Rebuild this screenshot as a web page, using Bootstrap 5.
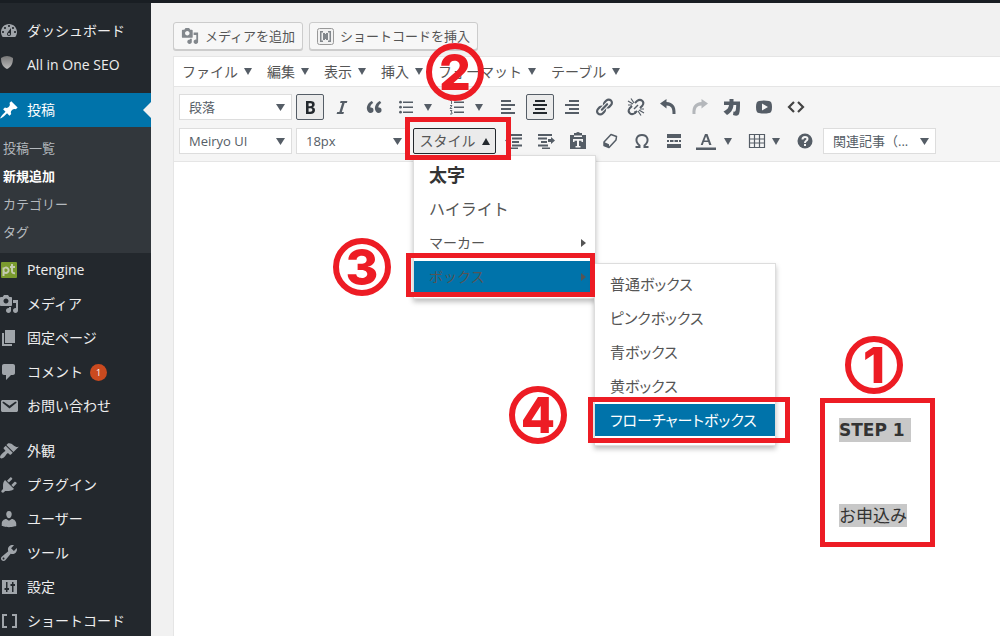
<!DOCTYPE html>
<html lang="ja">
<head>
<meta charset="utf-8">
<meta name="viewport" content="width=device-width, initial-scale=1">
<title>投稿の新規追加</title>
<link href="https://cdn.jsdelivr.net/npm/bootstrap@5.3.0/dist/css/bootstrap.min.css" rel="stylesheet">
<style>
  :root { --ink: #555d66; --mark: #ed1c24; --wpblue: #0073aa; --line: #e5e5e5; }
  body { font-family: "Open Sans", "Noto Sans CJK JP", sans-serif; font-size: 14px; line-height: 20px; background: #f1f1f1; color: #555; }
  button { font-family: inherit; }
  svg { display: block; flex: none; fill: currentColor; }
  .adminbar { height: 3px; background: #191e23; }

  /* sidebar */
  .side { width: 151px; background: #23282d; padding-top: 11px; }
  .side-link { height: 34px; gap: 7px; color: #eee; }
  .side-link svg { color: #a0a5aa; }
  .side-link.current { background: var(--wpblue); color: #fff; }
  .side-link.current svg { color: #fff; }
  .side-link.current::after { content: ""; margin-left: auto; border: 8px solid transparent; border-right-color: #f1f1f1; border-left: 0; }
  .side-gap { margin-top: 11px; }
  .side-sub { background: #32373c; padding: 7px 3px; font-size: 13px; line-height: 28px; }
  .side-sub a { color: #b4b9be; }
  .side-sub a.here { color: #fff; font-weight: 700; }
  .count { width: 17px; height: 17px; font-size: 9px; line-height: 17px; background: #ca4a1f; color: #fff; }

  /* editor */
  .work { padding: 19px 0 0 22px; }
  .inserts { gap: 6px; }
  .insert { height: 28px; padding: 0 7px; gap: 6px; font-size: 13px; line-height: 18px; color: #555; background: #f7f7f7; border: 1px solid #ccc; border-radius: 3px; box-shadow: 0 1px 0 #ccc; }
  .insert svg { color: #82878c; }
  .editor { margin-top: 6px; border: 1px solid var(--line); border-width: 1px 0 0 1px; background: #fff; }
  .menus { height: 30px; border-bottom: 1px solid var(--line); }
  .menu-btn { padding: 0 7px 0 8px; gap: 6px; border: 0; background: none; color: #555; height: 29px; }
  .tri { border: 4px solid transparent; border-top: 7px solid var(--ink); border-bottom: 0; }
  .tri.up { border-bottom: 7px solid #23282d; border-top: 0; }
  .tools { background: #f5f5f5; border-bottom: 1px solid var(--line); padding: 7px 5px; }
  .tools-row { height: 26px; gap: 4px; }
  .tools-row + .tools-row { margin-top: 8px; }
  .pick { width: 113px; height: 26px; padding: 0 22px 0 9px; font-size: 13px; line-height: 24px; color: #555d66; border: 1px solid #ddd; border-radius: 0; background-color: #fff; background-size: 9px 7px; background-position: right 6px center;
    --bs-form-select-bg-img: url("data:image/svg+xml,%3csvg xmlns='http://www.w3.org/2000/svg' viewBox='0 0 18 14'%3e%3cpath d='M0 0h18L9 14z' fill='%23555d66'/%3e%3c/svg%3e"); }
  .tool { width: 28px; height: 26px; padding: 0; border: 1px solid transparent; border-radius: 2px; background: none; color: var(--ink); display: flex; align-items: center; justify-content: center; }
  .tool.on { background: #ebebeb; border-color: #555d66; color: #23282d; }
  .tool.split { width: 47px; justify-content: flex-start; padding-left: 3px; gap: 8px; }
  .tool.drop { width: 44px; justify-content: flex-start; padding-left: 3px; gap: 5px; }
  .tool.styles { width: 83px; gap: 6px; font-size: 14px; color: #555; border-color: #23282d; }
  .tool.faded { opacity: .4; }

  /* style menu */
  .pop { border: 1px solid #ddd; border-radius: 0; box-shadow: 0 3px 5px rgba(0,0,0,.25); padding: 3px 0 6px; margin: 0; }
  .pop-main { top: 27px; left: 0; width: 183px; gap: 3px; }
  .pop-main.show, .pop-sub.show { display: flex; flex-direction: column; }
  .pop-item { height: 31px; padding: 0 9px 0 15px; display: flex; align-items: center; justify-content: space-between; font-size: 14px; white-space: nowrap; color: #555; }
  .pop-item.active { background: var(--wpblue); color: #555; }
  .pop-item.heavy { font-size: 18px; font-weight: 700; color: #333; }
  .pop-item.large { font-size: 16px; }
  .arrow { border: 4px solid transparent; border-left: 5px solid currentColor; border-right: 0; }
  .pop-sub { top: 2px; left: 180px; width: 182px; gap: 2px; padding: 4px 0 9px; }
  .pop-sub .pop-item { height: 32px; font-size: 15px; font-feature-settings: "palt"; }
  .pop-sub .pop-item.active { color: #fff; }

  /* red guide marks laid over the screen */
  .frame { position: absolute; border: 5px solid var(--mark); pointer-events: none; z-index: 1010; }
  .num { position: absolute; width: 58px; height: 58px; border: 6px solid var(--mark); border-radius: 50%; color: var(--mark); font: 800 50px/46px Inter, sans-serif; text-align: center; pointer-events: none; z-index: 1020; }
  .frame-2 { inset: -11px -15px -6px -8px; }
  .num-2 { left: -4px; top: -14px; }
  .frame-3 { inset: -8px 0 -5px -8px; }
  .num-3 { left: -81px; top: -23px; }
  .frame-4 { inset: -7px -15px -7px -7px; }
  .num-4 { left: -86px; top: -18px; }
  .frame-1 { inset: 0; }
  .num-1 { left: 25px; top: -62px; }

  .step { width: 115px; height: 149px; margin: 236px 65px 0 auto; padding: 20px 19px; font-size: 17px; line-height: 24px; color: #333; }
  .step .picked { background: #c8c8c8; white-space: pre; }
  .step p + p { margin-top: 62px; }
  .step .title { font-family: "DejaVu Sans", sans-serif; font-weight: 700; }
  .step .title .picked { padding: 2px 0; }
</style>
<script defer src="https://cdn.jsdelivr.net/npm/bootstrap@5.3.0/dist/js/bootstrap.bundle.min.js"></script>
</head>
<body>
<svg class="d-none" aria-hidden="true">
  <symbol id="media" viewBox="0 0 20 20"><path d="M13 11V4c0-.55-.45-1-1-1h-1.670L9 1H5L3.670 3H2c-.55 0-1 .45-1 1v7c0 .55.45 1 1 1h10c.55 0 1-.45 1-1zM7 4.500c1.380 0 2.500 1.120 2.500 2.500S8.380 9.500 7 9.500 4.500 8.380 4.500 7 5.620 4.500 7 4.500zM14 6h5v10.500c0 1.380-1.120 2.500-2.500 2.500S14 17.880 14 16.500s1.120-2.500 2.500-2.500c.17 0 .34.02.5.05V9h-3V6zm-4 8.050V13h2v3.500c0 1.380-1.120 2.500-2.500 2.500S7 17.880 7 16.500 8.120 14 9.500 14c.17 0 .34.02.5.05z"/></symbol>
</svg>
<div class="vh-100 d-flex flex-column overflow-hidden">
  <header class="adminbar flex-shrink-0"></header>
  <div class="d-flex flex-grow-1 overflow-hidden">

    <nav class="side flex-shrink-0 overflow-hidden" aria-label="管理メニュー">
      <a href="#" class="side-link d-flex align-items-center text-decoration-none">
        <svg width="20" height="20" viewBox="1 0 20 20"><path d="M3.760 16h12.480c1.100-1.370 1.760-3.110 1.760-5 0-4.420-3.580-8-8-8s-8 3.580-8 8c0 1.890.66 3.630 1.760 5zM10 4c.55 0 1 .45 1 1s-.45 1-1 1-1-.45-1-1 .45-1 1-1zM6 6c.55 0 1 .45 1 1s-.45 1-1 1-1-.45-1-1 .45-1 1-1zm8 0c.55 0 1 .45 1 1s-.45 1-1 1-1-.45-1-1 .45-1 1-1zm-5.370 5.550L12 7v6c0 1.100-.9 2-2 2s-2-.9-2-2c0-.57.24-1.080.63-1.450zM4 10c.55 0 1 .45 1 1s-.45 1-1 1-1-.45-1-1 .45-1 1-1zm12 0c.55 0 1 .45 1 1s-.45 1-1 1-1-.45-1-1 .45-1 1-1zm-5 3c0-.55-.45-1-1-1s-1 .45-1 1 .45 1 1 1 1-.45 1-1z" fill-rule="evenodd"/></svg>ダッシュボード</a>
      <a href="#" class="side-link d-flex align-items-center text-decoration-none">
        <svg width="20" height="20" viewBox="0 0 20 20"><defs><linearGradient id="sh" x2="0" y2="1"><stop stop-color="#777"/><stop offset="1" stop-color="#bbb"/></linearGradient></defs><path d="M1 3Q7-1 13 3c0 6-2 9-6 11-4-2-6-5-6-11z" fill="url(#sh)"/></svg>All in One SEO</a>
      <a href="#" class="side-link side-gap current d-flex align-items-center text-decoration-none" aria-current="page">
        <svg width="20" height="20" viewBox="1 0 20 20"><path d="M10.440 3.020l1.820-1.820 6.360 6.350-1.830 1.820c-1.050-.68-2.480-.57-3.410.36l-.75.75c-.92.93-1.040 2.350-.35 3.410l-1.830 1.820-2.410-2.410-2.800 2.790c-.42.42-3.380 2.710-3.800 2.290s1.860-3.390 2.280-3.810l2.790-2.790L4.100 9.360l1.830-1.820c1.050.69 2.480.57 3.400-.36l.75-.75c.93-.92 1.050-2.350.36-3.410z"/></svg>投稿</a>
      <div class="side-sub d-flex flex-column">
        <a href="#" class="text-decoration-none">投稿一覧</a>
        <a href="#" class="text-decoration-none here">新規追加</a>
        <a href="#" class="text-decoration-none">カテゴリー</a>
        <a href="#" class="text-decoration-none">タグ</a>
      </div>
      <a href="#" class="side-link d-flex align-items-center text-decoration-none">
        <svg width="20" height="20" viewBox="0 0 20 20"><rect x="1" y="2" width="16" height="16" rx="1" fill="#7a9a2e"/><path d="M3.500 16V7.500M3.500 9a2.700 2.700 0 1 1 0 2.500M12 4v7q0 2.500 3 2.300M10 7h5" fill="none" stroke="#c5cbb0" stroke-width="2"/></svg>Ptengine</a>
      <a href="#" class="side-link d-flex align-items-center text-decoration-none">
        <svg width="20" height="20" viewBox="1 0 20 20"><use href="#media" width="20" height="20"/></svg>メディア</a>
      <a href="#" class="side-link d-flex align-items-center text-decoration-none">
        <svg width="20" height="20" viewBox="1 0 20 20"><path d="M6 15V2h10v13H6zm-1 1h8v2H3V5h2v11z"/></svg>固定ページ</a>
      <a href="#" class="side-link d-flex align-items-center text-decoration-none">
        <svg width="20" height="20" viewBox="1 0 20 20"><path d="M5 2h9c1.100 0 2 .9 2 2v7c0 1.100-.9 2-2 2h-2l-5 5v-5H5c-1.100 0-2-.9-2-2V4c0-1.100.9-2 2-2z"/></svg>コメント
        <span class="count rounded-circle text-center">1</span></a>
      <a href="#" class="side-link d-flex align-items-center text-decoration-none">
        <svg width="20" height="20" viewBox="1 0 20 20"><path d="M3.870 4h13.250C18.370 4 19 4.590 19 5.790v8.420c0 1.190-.63 1.790-1.880 1.790H3.870c-1.250 0-1.880-.6-1.880-1.790V5.790c0-1.200.63-1.790 1.880-1.790zm6.620 8.600l6.740-5.530c.24-.2.43-.66.13-1.070-.29-.41-.82-.42-1.170-.17l-5.700 3.860L4.800 5.830c-.35-.25-.88-.24-1.170.17-.3.41-.11.87.13 1.070z"/></svg>お問い合わせ</a>
      <a href="#" class="side-link side-gap d-flex align-items-center text-decoration-none">
        <svg width="20" height="20" viewBox="1 0 20 20"><path d="M14.480 11.060L7.410 3.990l1.500-1.500c.5-.56 2.300-.47 3.510.32 1.210.8 1.430 1.280 2.910 2.100 1.180.64 2.450 1.260 4.450.85zm-.71.71L6.700 4.700 4.930 6.470c-.39.39-.39 1.020 0 1.410l1.060 1.060c.39.39.39 1.030 0 1.420-.6.6-1.430 1.110-2.210 1.690-.35.26-.7.53-1.010.84C1.430 14.230.4 16.080 1.400 17.070c.99 1 2.840-.03 4.180-1.360.31-.31.58-.66.85-1.020.57-.78 1.080-1.610 1.690-2.210.39-.39 1.020-.39 1.410 0l1.060 1.060c.39.39 1.020.39 1.410 0z"/></svg>外観</a>
      <a href="#" class="side-link d-flex align-items-center text-decoration-none">
        <svg width="20" height="20" viewBox="1 0 20 20"><path d="M13.110 4.360L9.870 7.600 8 5.730l3.240-3.240c.35-.34 1.050-.2 1.560.32.52.51.66 1.210.31 1.550zm-8 1.770l.91-1.120 9.010 9.010-1.190.84c-.71.71-2.630 1.160-3.820 1.160H6.140L4.900 17.260c-.59.59-1.540.59-2.120 0-.59-.58-.59-1.530 0-2.120l1.240-1.240v-3.880c0-1.130.4-3.190 1.090-3.890zm7.260 3.970l3.240-3.240c.34-.35 1.040-.21 1.550.31.52.51.66 1.210.31 1.550l-3.240 3.250z"/></svg>プラグイン</a>
      <a href="#" class="side-link d-flex align-items-center text-decoration-none">
        <svg width="20" height="20" viewBox="1 0 20 20"><path d="M10 9.250c-2.270 0-2.730-3.440-2.730-3.440C7 4.020 7.820 2 9.970 2c2.160 0 2.980 2.020 2.710 3.810 0 0-.41 3.440-2.680 3.440zm0 2.570L12.720 10c2.390 0 4.520 2.330 4.520 4.530v2.490s-3.650 1.130-7.240 1.130c-3.650 0-7.240-1.130-7.240-1.130v-2.490c0-2.250 1.940-4.480 4.470-4.480z"/></svg>ユーザー</a>
      <a href="#" class="side-link d-flex align-items-center text-decoration-none">
        <svg width="20" height="20" viewBox="1 0 20 20"><path d="M16.680 9.770c-1.340 1.340-3.300 1.670-4.950.99l-5.410 6.520c-.99.99-2.590.99-3.580 0s-.99-2.590 0-3.570l6.520-5.420c-.68-1.650-.35-3.610.99-4.950 1.280-1.280 3.120-1.620 4.720-1.060l-2.890 2.890 2.820 2.820 2.860-2.870c.53 1.580.18 3.390-1.080 4.650zM3.810 16.210c.4.39 1.040.39 1.430 0 .4-.4.4-1.040 0-1.430-.39-.4-1.030-.4-1.430 0-.39.39-.39 1.030 0 1.430z"/></svg>ツール</a>
      <a href="#" class="side-link d-flex align-items-center text-decoration-none">
        <svg width="20" height="20" viewBox="0 0 20 20"><path fill-rule="evenodd" d="M2 3h15v14H2zM6 5h1.500v6H9v2H7.500v2H6v-2H4.500v-2H6zM12 5h1.500v2H15v2h-1.500v6H12V9h-1.500V7H12z"/></svg>設定</a>
      <a href="#" class="side-link d-flex align-items-center text-decoration-none">
        <svg width="20" height="20" viewBox="0 0 20 20"><path d="M2 3h5v2H4v10h3v2H2zM17 3h-5v2h3v10h-3v2h5z"/></svg>ショートコード</a>
    </nav>

    <main class="work flex-grow-1 d-flex flex-column">
      <div class="inserts d-flex">
        <button type="button" class="insert d-flex align-items-center"><svg width="18" height="18"><use href="#media"/></svg>メディアを追加</button>
        <button type="button" class="insert d-flex align-items-center"><svg width="17" height="17" viewBox="0 0 17 17"><rect x=".5" y=".5" width="16" height="16" rx="2" fill="#f1f1f1" stroke="#999"/><path d="M3 3h3v1.500H4.500v8H6V14H3zM14 3h-3v1.500h1.500v8H11V14h3zM6 5h2v1h1V5h2v7H9v-1H8v1H6z"/></svg>ショートコードを挿入</button>
      </div>

      <section class="editor flex-grow-1">
        <div class="menus d-flex" role="menubar">
          <button type="button" class="menu-btn d-flex align-items-center">ファイル<span class="tri"></span></button>
          <button type="button" class="menu-btn d-flex align-items-center">編集<span class="tri"></span></button>
          <button type="button" class="menu-btn d-flex align-items-center">表示<span class="tri"></span></button>
          <button type="button" class="menu-btn d-flex align-items-center">挿入<span class="tri"></span></button>
          <div class="position-relative">
            <button type="button" class="menu-btn d-flex align-items-center">フォーマット<span class="tri"></span></button>
            <span class="num num-2">2</span>
          </div>
          <button type="button" class="menu-btn d-flex align-items-center">テーブル<span class="tri"></span></button>
        </div>

        <div class="tools">
          <div class="tools-row d-flex">
            <select class="form-select pick" aria-label="段落書式"><option>段落</option></select>
            <button type="button" class="tool on" aria-label="太字"><svg width="20" height="20" viewBox="0 0 20 20"><path d="M6 4v13h4.540c1.370 0 2.460-.33 3.260-1 .8-.66 1.200-1.580 1.200-2.770 0-.84-.17-1.510-.51-2.010s-.9-.85-1.670-1.030v-.09c.57-.1 1.020-.4 1.360-.9s.51-1.130.51-1.910c0-1.140-.39-1.980-1.170-2.500C12.750 4.260 11.500 4 9.780 4H6zm2.570 5.150V6.260h1.360c.73 0 1.270.11 1.610.32.34.22.51.58.51 1.070 0 .54-.16.92-.47 1.150s-.82.35-1.510.35h-1.500zm0 2.190h1.600c1.440 0 2.160.53 2.160 1.610 0 .6-.17 1.050-.51 1.340s-.86.43-1.570.43H8.570v-3.380z"/></svg></button>
            <button type="button" class="tool" aria-label="イタリック"><svg width="20" height="20" viewBox="0 0 20 20"><path d="M14.780 6h-2.130l-2.800 9h2.120l-.62 2H4.600l.62-2h2.140l2.800-9H8.030l.62-2h6.750z"/></svg></button>
            <button type="button" class="tool" aria-label="引用"><svg width="20" height="20" viewBox="0 0 20 20"><path d="M9.490 13.220c0-.74-.2-1.380-.61-1.900-.62-.78-1.830-.88-2.530-.72-.29-1.650 1.110-3.750 2.920-4.650L7.880 4c-2.730 1.300-5.420 4.280-4.960 8.050C3.210 14.430 4.590 16 6.540 16c.85 0 1.560-.25 2.120-.75s.83-1.180.83-2.030zm8.050 0c0-.74-.2-1.380-.61-1.900-.63-.78-1.830-.88-2.530-.72-.29-1.650 1.110-3.750 2.920-4.650L15.930 4c-2.730 1.300-5.410 4.280-4.950 8.050.29 2.380 1.660 3.950 3.610 3.950.85 0 1.560-.25 2.120-.75s.83-1.180.83-2.030z"/></svg></button>
            <button type="button" class="tool split" aria-label="番号なしリスト"><svg width="20" height="20" viewBox="0 0 20 20"><path d="M7 4.500h10V6H7zM7 9.500h10V11H7zM7 14.500h10V16H7z"/><circle cx="4.500" cy="5.200" r="1.400"/><circle cx="4.500" cy="10.200" r="1.400"/><circle cx="4.500" cy="15.200" r="1.400"/></svg><span class="tri"></span></button>
            <button type="button" class="tool split" aria-label="番号付きリスト"><svg width="20" height="20" viewBox="0 0 20 20"><path d="M7 4.500h10V6H7zM7 9.500h10V11H7zM7 14.500h10V16H7z"/><path d="M3 3.500h1.500V7M3 8.500h2L3 11.500h2.200M3 13.500h2L4 15l1 .5v1.500H3" fill="none" stroke="currentColor" stroke-width=".9"/></svg><span class="tri"></span></button>
            <button type="button" class="tool" aria-label="左寄せ"><svg width="20" height="20" viewBox="0 0 20 20"><path d="M3 3h10v2H3zM3 7h14v2H3zM3 11h10v2H3zM3 15h14v2H3z"/></svg></button>
            <button type="button" class="tool on" aria-label="中央揃え"><svg width="20" height="20" viewBox="0 0 20 20"><path d="M5 3h10v2H5zM3 7h14v2H3zM5 11h10v2H5zM3 15h14v2H3z"/></svg></button>
            <button type="button" class="tool" aria-label="右寄せ"><svg width="20" height="20" viewBox="0 0 20 20"><path d="M7 3h10v2H7zM3 7h14v2H3zM7 11h10v2H7zM3 15h14v2H3z"/></svg></button>
            <button type="button" class="tool" aria-label="リンクの挿入"><svg width="20" height="20" viewBox="0 0 20 20"><path d="M17.740 2.760c1.680 1.690 1.680 4.410 0 6.100l-1.530 1.520c-1.120 1.120-2.700 1.470-4.140 1.090l2.620-2.610.76-.77.76-.76c.84-.84.84-2.200 0-3.040-.84-.85-2.200-.85-3.040 0l-.77.76-3.380 3.380c-.37-1.440-.02-3.020 1.100-4.140l1.520-1.530c1.690-1.680 4.420-1.680 6.100 0zM8.590 13.430l5.340-5.340c.42-.42.42-1.100 0-1.520-.44-.43-1.130-.39-1.530 0l-5.330 5.340c-.42.42-.42 1.100 0 1.520.44.43 1.130.39 1.520 0zm-.76 2.290l4.140-4.150c.38 1.440.03 3.020-1.090 4.140l-1.520 1.530c-1.690 1.680-4.410 1.680-6.100 0-1.680-1.680-1.680-4.420 0-6.100l1.530-1.520c1.120-1.120 2.700-1.470 4.140-1.100l-4.140 4.150c-.85.84-.85 2.200 0 3.050.84.84 2.200.84 3.040 0z"/></svg></button>
            <button type="button" class="tool" aria-label="リンクの削除"><svg width="20" height="20" viewBox="0 0 20 20"><g fill="none" stroke="currentColor" stroke-width="2"><path d="M9 6l2-2c4-3 8 1 5.500 4.500L14 11M11 14l-2 2c-4 3-8-1-5.500-4.500L6 9"/><path d="M2 4l5 3M5 1.500l3 4.500M2 8h4M18 16l-5-3M15 18.500L12 14M18 12h-4M9 17v-3" stroke-width="1.200"/><path d="M8 12l4-4" stroke-width="1.500"/></g></svg></button>
            <button type="button" class="tool" aria-label="取り消し"><svg width="20" height="20" viewBox="0 0 20 20"><path d="M2 6.500L8.500 2v3C15 5.500 18 9 17.500 17h-3c.3-6-1.500-8.300-6-8.500v3z"/></svg></button>
            <button type="button" class="tool faded" aria-label="やり直し"><svg width="20" height="20" viewBox="0 0 20 20"><path d="M18 6.500L11.500 2v3C5 5.500 2 9 2.500 17h3c-.3-6 1.500-8.300 6-8.500v3z"/></svg></button>
            <button type="button" class="tool" aria-label="ふりがな"><svg width="20" height="20" viewBox="0 0 20 20"><path d="M2 4.500h5.500V2h4v2.500H18c0 6 0 10-1 12.500-1 2-3 2-6 1l.5-3.500c2 .5 2.500 0 2.700-6.500H11.500c-.5 5-3 8-6.500 10l-3.500-3.500c4-2 5-3.500 5.500-6.500H2z"/></svg></button>
            <button type="button" class="tool" aria-label="動画"><svg width="20" height="20" viewBox="0 0 20 20"><path fill-rule="evenodd" d="M5 4q5-1 10 0 3 0 3 6t-3 6q-5 1-10 0-3 0-3-6t3-6zm3 2.500v7l6-3.500z"/></svg></button>
            <button type="button" class="tool" aria-label="コード"><svg width="20" height="20" viewBox="0 0 20 20"><path d="M8 5l-5 5 5 5M12 5l5 5-5 5" fill="none" stroke="#444" stroke-width="2.200"/></svg></button>
          </div>

          <div class="tools-row d-flex">
            <select class="form-select pick" aria-label="フォント"><option>Meiryo UI</option></select>
            <select class="form-select pick" aria-label="文字サイズ"><option>18px</option></select>
            <div class="position-relative">
              <button type="button" class="tool on styles" aria-expanded="true">スタイル<span class="tri up"></span></button>
              <span class="frame frame-2"></span>
              <div class="dropdown-menu pop pop-main show">
                <a href="#" class="pop-item heavy text-decoration-none">太字</a>
                <a href="#" class="pop-item large text-decoration-none">ハイライト</a>
                <a href="#" class="pop-item text-decoration-none">マーカー<span class="arrow"></span></a>
                <div class="position-relative">
                  <a href="#" class="pop-item active text-decoration-none">ボックス<span class="arrow"></span></a>
                  <span class="frame frame-3"></span>
                  <span class="num num-3">3</span>
                  <div class="dropdown-menu pop pop-sub show">
                    <a href="#" class="pop-item text-decoration-none">普通ボックス</a>
                    <a href="#" class="pop-item text-decoration-none">ピンクボックス</a>
                    <a href="#" class="pop-item text-decoration-none">青ボックス</a>
                    <a href="#" class="pop-item text-decoration-none">黄ボックス</a>
                    <div class="position-relative">
                      <a href="#" class="pop-item active text-decoration-none">フローチャートボックス</a>
                      <span class="frame frame-4"></span>
                      <span class="num num-4">4</span>
                    </div>
                  </div>
                </div>
              </div>
            </div>
            <button type="button" class="tool" aria-label="インデントを減らす"><svg width="20" height="20" viewBox="0 0 20 20"><path d="M4 3h14v2H4zM8 6.500h10v2H8zM8 10h7v2H8zM8 13.500h10v2H8zM6 16.500h8V18H6zM1 9.500L5 6v2h2v3H5v2z"/></svg></button>
            <button type="button" class="tool" aria-label="インデントを増やす"><svg width="20" height="20" viewBox="0 0 20 20"><path d="M2 3h14v2H2zM2 6.500h9v2H2zM5 10h6v2H5zM2 13.500h10v2H2zM6 16.500h8V18H6zM19 9.500L15 6v2h-3v3h3v2z"/></svg></button>
            <button type="button" class="tool" aria-label="テキストとして貼り付け"><svg width="20" height="20" viewBox="0 0 20 20"><path fill-rule="evenodd" d="M2 4h4V2h2q2-2 4 0h2v2h4v14H2zM6 4.500V6h8V4.500zM5 8v3h1.500V9.800H9v5.200H7.500v1.500h5V15H11V9.800h2.500V11H15V8z"/></svg></button>
            <button type="button" class="tool" aria-label="書式設定をクリア"><svg width="20" height="20" viewBox="0 0 20 20"><path d="M11 3.500L16.500 5.500 16 9l-7 7.500-5-2L4 11z" fill="none" stroke="currentColor" stroke-width="1.500" stroke-linejoin="round"/><path d="M4 11l5 2.200v3.300l-5-2z"/></svg></button>
            <button type="button" class="tool" aria-label="特殊文字"><svg width="20" height="20" viewBox="0 0 20 20"><path d="M3.500 16h4v-1.500C2 10 4.500 4 10 4s8 6 2.500 10.500V16h4" fill="none" stroke="currentColor" stroke-width="2"/></svg></button>
            <button type="button" class="tool" aria-label="続きを読む"><svg width="20" height="20" viewBox="0 0 20 20"><path d="M3 3h14v4H3zM3 13h14v4H3zM3 9h2v2H3zM6 9h3.500v2H6zM10.500 9H14v2h-3.500zM15 9h2v2h-2z"/></svg></button>
            <button type="button" class="tool split" aria-label="文字色"><svg width="20" height="20" viewBox="0 0 20 20"><path fill-rule="evenodd" d="M9 3h2.500l4 11h-2.300l-1-3H7.800l-1 3H4.700zm1.100 2.300L8.400 9.500h3.300zM0 16.500h20v2.500H0z"/></svg><span class="tri"></span></button>
            <button type="button" class="tool drop" aria-label="表"><svg width="20" height="20" viewBox="0 0 20 20"><path d="M2.500 3.500h15v13h-15zM2.500 8h15M2.500 12h15M7.500 3.500v13M12.500 3.500v13" fill="none" stroke="currentColor" stroke-width="1.200"/></svg><span class="tri"></span></button>
            <button type="button" class="tool" aria-label="ヘルプ"><svg width="20" height="20" viewBox="0 0 20 20"><circle cx="10" cy="10" r="7.500"/><path d="M7.500 8.500Q7.500 6 10 6t2.500 2Q12.500 9 11 10q-1 .7-1 2M10 13v2" fill="none" stroke="#f5f5f5" stroke-width="2"/></svg></button>
            <select class="form-select pick" aria-label="関連記事"><option>関連記事（...</option></select>
          </div>
        </div>

        <div class="step position-relative">
          <span class="frame frame-1"></span>
          <span class="num num-1">1</span>
          <p class="m-0 title"><span class="picked">STEP 1 </span></p>
          <p class="mb-0"><span class="picked">お申込み</span></p>
        </div>
      </section>
    </main>
  </div>
</div>
</body>
</html>
